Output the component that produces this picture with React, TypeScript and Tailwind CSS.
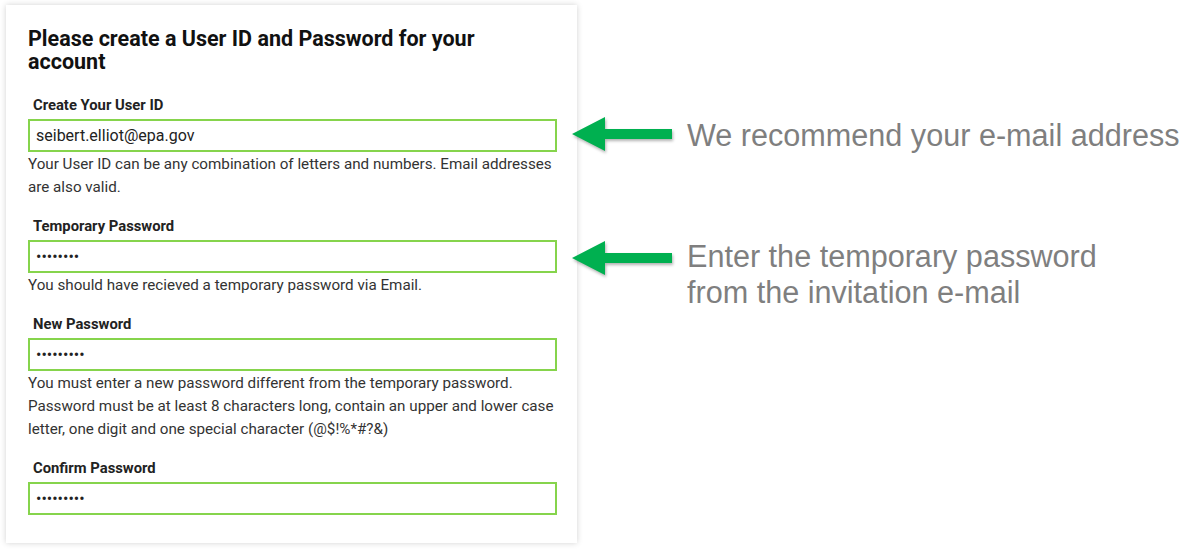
import React from "react";

function Arrow() {
  return (
    <svg width="102" height="40" viewBox="0 0 102 40" className="shrink-0" style={{ filter: "drop-shadow(1px 2px 1.5px rgba(0,0,0,0.3))" }}>
      <polygon points="1,19 34,2 34,14 101,14 101,24 34,24 34,36" fill="#00b050" />
    </svg>
  );
}

function Field({ label, value, help }: { label: string; value: string; help?: React.ReactNode }) {
  return (
    <div className="flex flex-col">
      <div className="pl-[5px] text-[14.8px] font-bold text-[#222] leading-[20px]">{label}</div>
      <div className="mt-[4px] h-[33px] w-[529px] border-2 border-[#86d44c] flex items-center px-[6px] text-[16px] text-[#222]">
        {value}
      </div>
      {help && <div className="mt-[1px] w-[540px] text-[15.2px] leading-[23px] text-[#333] whitespace-nowrap">{help}</div>}
    </div>
  );
}

export default function App() {
  return (
    <div className="w-[1189px] h-[550px] bg-white flex items-start" style={{ fontFamily: "Roboto, 'Liberation Sans', sans-serif" }}>
      <div className="ml-[6px] mt-[5px] w-[571px] h-[538px] bg-white shadow-[0_0_6px_rgba(0,0,0,0.18)] pl-[22px] pt-[22px] flex flex-col shrink-0">
        <h1 className="text-[21.5px] font-bold leading-[23px] text-[#111] w-[490px]">
          Please create a User ID and Password for your account
        </h1>
        <div className="mt-[22px] flex flex-col gap-[17px]">
          <Field
            label="Create Your User ID"
            value="seibert.elliot@epa.gov"
            help={
              <>
                Your User ID can be any combination of letters and numbers. Email addresses
                <br />
                are also valid.
              </>
            }
          />
          <Field
            label="Temporary Password"
            value="••••••••"
            help="You should have recieved a temporary password via Email."
          />
          <Field
            label="New Password"
            value="•••••••••"
            help={
              <>
                You must enter a new password different from the temporary password.
                <br />
                Password must be at least 8 characters long, contain an upper and lower case
                <br />
                letter, one digit and one special character (@$!%*#?&amp;)
              </>
            }
          />
          <Field label="Confirm Password" value="•••••••••" />
        </div>
      </div>
      <div className="-ml-[6px] mt-[115px] flex flex-col" style={{ fontFamily: "'Liberation Sans', Arial, sans-serif" }}>
        <div className="flex items-center gap-[14px]">
          <Arrow />
          <div className="text-[30.6px] leading-[36px] text-[#7f7f7f] whitespace-nowrap">We recommend your e-mail address</div>
        </div>
        <div className="mt-[84px] flex items-start gap-[14px]">
          <Arrow />
          <div className="-mt-[1px] text-[30.6px] leading-[36px] text-[#7f7f7f] whitespace-nowrap">
            Enter the temporary password
            <br />
            from the invitation e-mail
          </div>
        </div>
      </div>
    </div>
  );
}
